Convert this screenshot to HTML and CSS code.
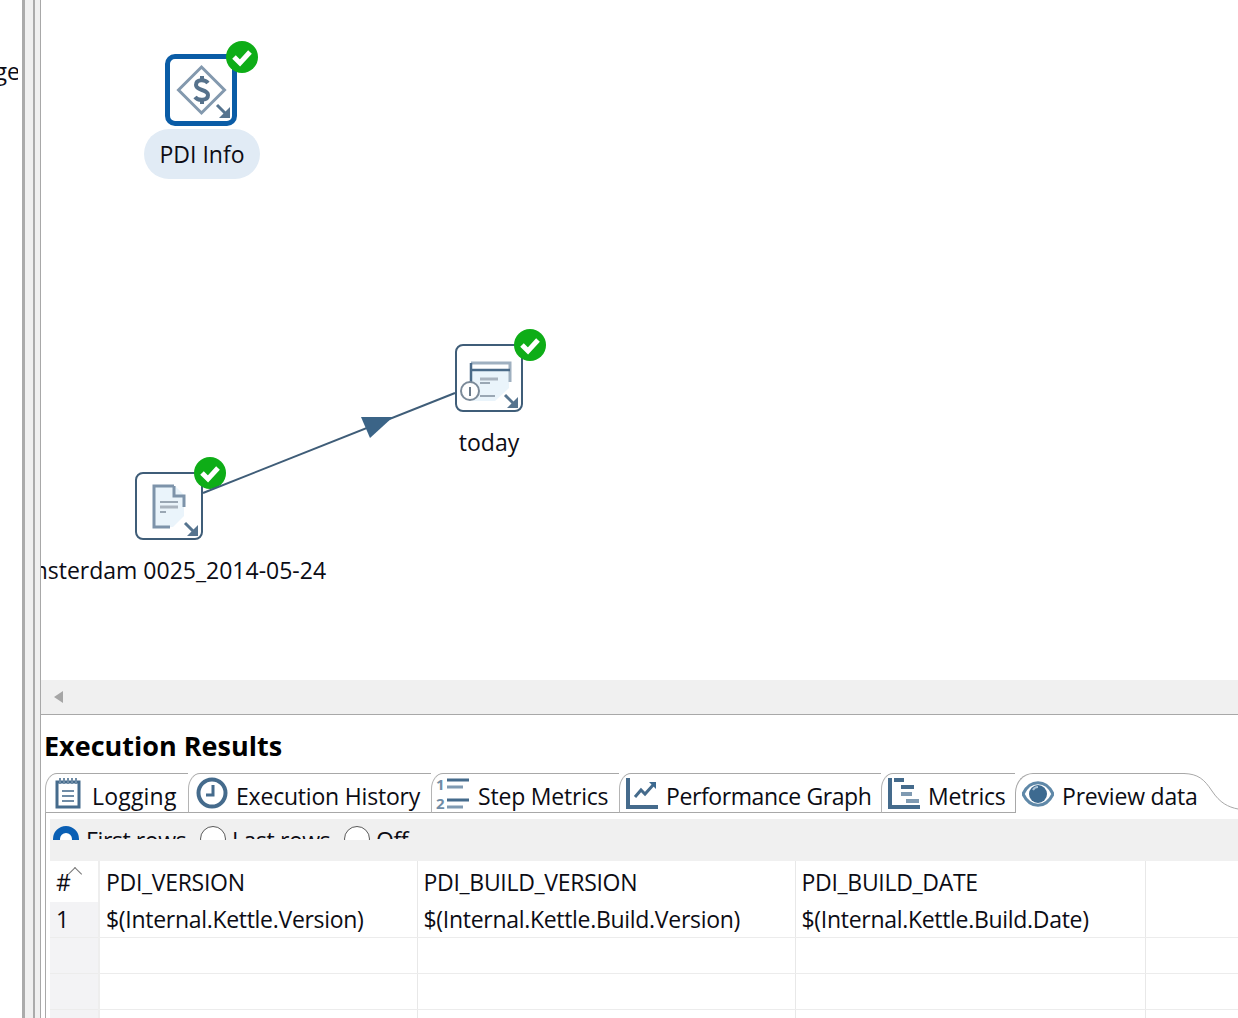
FILE: index.html
```html
<!DOCTYPE html>
<html>
    <head>
        <title>PDI Transformation</title>
        <link rel="stylesheet" href="styles.css">
    </head>
    <body>
        <div id="strip"><span class="stripText">Manage</span></div>
        <div id="splitter"><div class="sashA"></div><div class="sashB"></div></div>
        <main>
            <div id="canvas">
                <!-- PDI Info step -->
                <div class="step selected stepInfo">
                    <svg width="62" height="62" viewBox="0 0 62 62">
                        <path class="faint" d="M31.5 8 L54.5 31 L31.5 54 L8.5 31 Z"></path>
                        <path class="dollar" d="M38 24 C35 20 26 20 26 26 C26 32 38 30 38 36 C38 42 28 42 25 38 M32 17 V21 M32 41 V45"></path>
                        <path class="corner" d="M47 46 L58 57"></path>
                        <path class="cornerHead" d="M60 48 V59 H49 Z"></path>
                    </svg>
                </div>
                <div class="badge badgeInfo"><svg width="32" height="32" viewBox="0 0 32 32"><path d="M8 16 L14 22 L24 11"></path></svg></div>
                <div class="pill">PDI Info</div>

                <!-- today step -->
                <div class="step stepToday">
                    <svg width="64" height="64" viewBox="0 0 64 64">
                        <path class="fillPale" d="M15 24 H52 V42 L38 55 H15 Z"></path>
                        <path class="midLine" d="M14 17 H53 V36"></path>
                        <path class="darkLine" d="M14 17 V36 M14 24 H53"></path>
                        <path class="greyBar" d="M23 33 H41"></path>
                        <path class="greyThin" d="M23 37 H33 M23 50 H38"></path>
                        <circle class="infoDot" cx="13" cy="45" r="9"></circle>
                        <path class="infoMark" d="M13 41 V50"></path>
                        <path class="corner" d="M48 49 L59 60"></path>
                        <path class="cornerHead" d="M61 51 V62 H50 Z"></path>
                    </svg>
                </div>
                <div class="badge badgeToday"><svg width="32" height="32" viewBox="0 0 32 32"><path d="M8 16 L14 22 L24 11"></path></svg></div>
                <div class="stepLabel labelToday">today</div>

                <!-- text file input step -->
                <div class="step stepFile">
                    <svg width="64" height="64" viewBox="0 0 64 64">
                        <path class="fillPale" d="M17 12 H38 L47 21 V42 L36 53 H17 Z"></path>
                        <path class="docLine" d="M37 12 H17 V53 H33 M37 12 V22 H47 V33"></path>
                        <path class="greyThin" d="M23 28 H41 M23 38 H29"></path>
                        <path class="greyBar" d="M23 33 H41"></path>
                        <path class="corner" d="M48 49 L59 60"></path>
                        <path class="cornerHead" d="M61 51 V62 H50 Z"></path>
                    </svg>
                </div>
                <div class="badge badgeFile"><svg width="32" height="32" viewBox="0 0 32 32"><path d="M8 16 L14 22 L24 11"></path></svg></div>
                <div class="stepLabel labelFile">Amsterdam 0025_2014-05-24</div>

                <svg id="hop" width="1197" height="680" viewBox="0 0 1197 680">
                    <line x1="162" y1="493" x2="414" y2="393"></line>
                    <polygon points="320,417 352,417 329,438"></polygon>
                </svg>
            </div>

            <div id="hscroll"><span class="arrowLeft"></span></div>

            <section id="results">
                <h2>Execution Results</h2>
                <div id="tabs">
                    <div class="tab tabLogging">
                        <svg width="26" height="32" viewBox="0 0 26 32">
                            <path class="iconStroke" d="M2 5 H24 V30 H2 Z"></path>
                            <path class="iconThin" d="M7 14 H19 M7 19 H19 M7 24 H19"></path>
                            <path class="iconThin" d="M5 1 V7 M9 1 V7 M13 1 V7 M17 1 V7 M21 1 V7"></path>
                        </svg>
                        <span>Logging</span>
                    </div>
                    <div class="tab tabHistory">
                        <svg width="32" height="32" viewBox="0 0 32 32">
                            <circle class="iconStroke thick" cx="16" cy="16" r="13.5"></circle>
                            <path class="iconStroke" d="M17 8 V18 H10"></path>
                        </svg>
                        <span>Execution History</span>
                    </div>
                    <div class="tab tabSteps">
                        <svg width="34" height="34" viewBox="0 0 34 34">
                            <text class="iconNum" x="0" y="14">1</text>
                            <text class="iconNum" x="0" y="33">2</text>
                            <path class="iconStroke" d="M11 4 H33 M11 24 H33"></path>
                            <path class="iconPale" d="M11 11 H27 M11 31 H27"></path>
                        </svg>
                        <span>Step Metrics</span>
                    </div>
                    <div class="tab tabGraph">
                        <svg width="32" height="32" viewBox="0 0 32 32">
                            <path class="iconStroke thick" d="M2 1 V30 H32"></path>
                            <path class="iconStroke" d="M9 20 L15 13 L19 17 L28 7"></path>
                            <path class="iconFill" d="M23 5 H30 V12 Z"></path>
                        </svg>
                        <span>Performance Graph</span>
                    </div>
                    <div class="tab tabMetrics">
                        <svg width="32" height="32" viewBox="0 0 32 32">
                            <path class="iconStroke thick" d="M2 1 V30 H32"></path>
                            <path class="iconStroke thick" d="M6 3 H16 M13 10 H26"></path>
                            <path class="iconPale thick" d="M13 17 H24 M18 24 H31"></path>
                        </svg>
                        <span>Metrics</span>
                    </div>
                    <div class="tab tabPreview">
                        <svg width="32" height="26" viewBox="0 0 32 26">
                            <path class="iconEye" d="M1 13 C8 -2 24 -2 31 13 C24 28 8 28 1 13 Z"></path>
                            <circle class="iconFill" cx="16" cy="13" r="9"></circle>
                            <path class="iconShine" d="M11 9 C12 7 14 6 16 6"></path>
                        </svg>
                        <span>Preview data</span>
                    </div>
                    <svg id="tabCurve" width="54" height="37" viewBox="0 0 54 37">
                        <path d="M0 0.5 C14 1 20 6 28 18 C36 30 44 34 54 36"></path>
                    </svg>
                </div>

                <div id="folderBody">
                    <div id="toolbar">
                        <div class="radios">
                            <span class="radio on"></span><span class="radioText radioFirst">First rows</span>
                            <span class="radio"></span><span class="radioText">Last rows</span>
                            <span class="radio"></span><span class="radioText">Off</span>
                        </div>
                    </div>

                    <table id="grid">
                        <colgroup>
                            <col class="colNum"><col class="colA"><col class="colB"><col class="colC"><col>
                        </colgroup>
                        <tr class="headRow">
                            <th class="numHead">#<span class="sortMark"></span></th>
                            <th>PDI_VERSION</th>
                            <th>PDI_BUILD_VERSION</th>
                            <th>PDI_BUILD_DATE</th>
                            <th></th>
                        </tr>
                        <tr class="firstRow">
                            <td class="num">1</td>
                            <td>$(Internal.Kettle.Version)</td>
                            <td>$(Internal.Kettle.Build.Version)</td>
                            <td>$(Internal.Kettle.Build.Date)</td>
                            <td></td>
                        </tr>
                        <tr><td class="num"></td><td></td><td></td><td></td><td></td></tr>
                        <tr><td class="num"></td><td></td><td></td><td></td><td></td></tr>
                        <tr><td class="num"></td><td></td><td></td><td></td><td></td></tr>
                    </table>
                </div>
            </section>
        </main>
    </body>
</html>
```

FILE: styles.css
```css
html, body{
    margin:0;
    padding:0;
    height:1018px;
    overflow:hidden;
}
body{
    display:flex;
    width:1238px;
    font-family:"Open Sans", sans-serif;
    font-size:23px;
    color:#0c0c14;
    background-color:#fff;
}
#strip{
    width:22px;
    overflow:hidden;
    position:relative;
    flex:none;
    clip-path:inset(0 4px 0 0);
}
.stripText{
    position:absolute;
    right:2px;
    top:55px;
    white-space:nowrap;
}
#splitter{
    width:19px;
    flex:none;
    display:flex;
    box-sizing:border-box;
    background-color:#f0f0f0;
    border-right:1px solid #a8a8a8;
}
.sashA{
    width:13px;
    box-sizing:border-box;
    border-left:3px solid #ababab;
    border-right:2px solid #ababab;
}
.sashB{
    width:5px;
    background-color:#f0f0f0;
}
main{
    flex:1;
    min-width:0;
    display:flex;
    flex-direction:column;
}

/* canvas */
#canvas{
    height:680px;
    position:relative;
    overflow:hidden;
    flex:none;
}
#hop{
    position:absolute;
    left:0;
    top:0;
}
#hop line{
    stroke:#3f5d78;
    stroke-width:2;
}
#hop polygon{
    fill:#3b6487;
}
.step{
    position:absolute;
    box-sizing:border-box;
    width:68px;
    height:68px;
    border:2px solid #3f5d78;
    border-radius:8px;
    background-color:#fff;
}
.step svg{
    display:block;
}
.step.selected{
    width:72px;
    height:72px;
    border:5px solid #0a5ca6;
    border-radius:10px;
}
.stepInfo{ left:124px; top:54px; }
.stepToday{ left:414px; top:344px; }
.stepFile{ left:94px; top:472px; }
.badge{
    position:absolute;
    width:32px;
    height:32px;
    border-radius:50%;
    background-color:#0ead17;
}
.badge svg{
    display:block;
}
.badge path{
    fill:none;
    stroke:#fff;
    stroke-width:5;
}
.badgeInfo{ left:185px; top:41px; }
.badgeToday{ left:473px; top:329px; }
.badgeFile{ left:153px; top:457px; }
.pill{
    position:absolute;
    left:103px;
    top:129px;
    width:116px;
    height:50px;
    line-height:51px;
    border-radius:25px;
    text-align:center;
    background-color:#e1ebf5;
}
.stepLabel{
    position:absolute;
    white-space:nowrap;
    transform:translateX(-50%);
}
.labelToday{ left:448px; top:426px; }
.labelFile{ left:128px; top:554px; }
.faint{
    fill:none;
    stroke:#8399ae;
    stroke-width:3;
}
.dollar{
    fill:none;
    stroke:#56728c;
    stroke-width:4;
}
.corner{
    fill:none;
    stroke:#56748f;
    stroke-width:3;
}
.cornerHead{
    fill:#56748f;
}
.fillPale{
    fill:#eaf4fb;
    stroke:none;
}
.darkLine{
    fill:none;
    stroke:#4a6a88;
    stroke-width:2.5;
}
.midLine{
    fill:none;
    stroke:#9fb0c0;
    stroke-width:3;
}
.greyBar{
    fill:none;
    stroke:#aab4bf;
    stroke-width:3;
}
.greyThin{
    fill:none;
    stroke:#9aa7b4;
    stroke-width:2;
}
.docLine{
    fill:none;
    stroke:#7d93aa;
    stroke-width:3;
}
.infoDot{
    fill:#fff;
    stroke:#7b8a99;
    stroke-width:2;
}
.infoMark{
    fill:none;
    stroke:#6b7b8b;
    stroke-width:2;
}

/* scrollbar */
#hscroll{
    height:34px;
    flex:none;
    box-sizing:border-box;
    display:flex;
    align-items:center;
    padding-left:13px;
    background-color:#f0f0f0;
}
.arrowLeft{
    width:0;
    height:0;
    border-top:6px solid transparent;
    border-bottom:6px solid transparent;
    border-right:9px solid #a6a6a6;
}

/* results */
#results{
    flex:1;
    border-top:1px solid #a8a8a8;
    padding-left:4px;
    min-height:0;
}
h2{
    margin:0 0 0 -1px;
    height:58px;
    line-height:62px;
    font-size:27px;
    font-weight:700;
    color:#000;
}
#tabs{
    height:40px;
    display:flex;
    position:relative;
    letter-spacing:-0.2px;
}
.tab{
    display:flex;
    align-items:center;
    box-sizing:border-box;
    height:40px;
    flex:none;
    white-space:nowrap;
    border-top:1px solid #a8a8a8;
    border-left:1px solid #b4b4b4;
    border-bottom:1px solid #a8a8a8;
    border-top-left-radius:12px 16px;
}
.tab svg{
    flex:none;
}
.tab span{
    margin-top:5px;
}
.tabLogging{ width:143px; padding-left:9px; gap:11px; letter-spacing:0.2px; }
.tabHistory{ width:243px; padding-left:7px; gap:8px; }
.tabSteps{ width:188px; padding-left:4px; gap:8px; }
.tabGraph{ width:262px; padding-left:6px; gap:8px; letter-spacing:-0.4px; }
.tabMetrics{ width:134px; padding-left:6px; gap:8px; }
.tabPreview{
    width:170px;
    padding-left:6px;
    gap:8px;
    border-bottom:0;
    border-top-left-radius:18px 20px;
    border-left-color:#a8a8a8;
}
.tabPreview span{
    margin-top:4px;
}
#tabCurve{
    position:absolute;
    left:1139px;
    top:0;
}
#tabCurve path{
    fill:none;
    stroke:#a8a8a8;
}
.iconStroke{
    fill:none;
    stroke:#456b8c;
    stroke-width:3;
}
.iconThin{
    fill:none;
    stroke:#6f8ca6;
    stroke-width:2;
}
.iconPale{
    fill:none;
    stroke:#7f9ab2;
    stroke-width:3;
}
.thick{
    stroke-width:4;
}
.iconFill{
    fill:#3d6a90;
}
.iconEye{
    fill:#fff;
    stroke:#5f88a8;
    stroke-width:3;
}
.iconShine{
    fill:none;
    stroke:#a9c2d6;
    stroke-width:2;
}
.iconNum{
    font-size:15px;
    font-weight:700;
    fill:#6f8ca6;
}

#folderBody{
    border-left:1px solid #a8a8a8;
}

/* radios, cut off at the bottom of the bar */
#toolbar{
    padding-top:6px;
    margin-left:4px;
    background-color:#fff;
}
.radios{
    height:19px;
    padding-top:6px;
    padding-bottom:17px;
    background-color:#f0f0f0;
    display:flex;
    align-items:flex-start;
}
.radios > span{
    clip-path:inset(-2px -2px calc(100% - 14px) -2px);
}
.radio{
    flex:none;
    box-sizing:border-box;
    width:26px;
    height:26px;
    margin-top:1px;
    border:1px solid #5a5a5a;
    border-radius:50%;
    background-color:#fff;
    margin-left:3px;
}
.radio.on{
    border:7px solid #0a5fb4;
    margin-right:1px;
}
.radioText{
    margin-left:6px;
    width:109px;
    line-height:30px;
    letter-spacing:-0.4px;
    white-space:nowrap;
    flex:none;
}
.radioFirst{
    width:111px;
}

/* preview grid */
#grid{
    margin-left:4px;
    width:1192px;
    table-layout:fixed;
    border-collapse:collapse;
}
.colNum{ width:49px; }
.colA{ width:318px; }
.colB{ width:378px; }
.colC{ width:350px; }
#grid th, #grid td{
    padding:0 0 0 6px;
    text-align:left;
    font-weight:400;
    letter-spacing:-0.3px;
    white-space:nowrap;
    overflow:hidden;
    border-right:1px solid #e8e8e8;
    border-bottom:1px solid #ececec;
}
#grid th{
    height:41px;
    box-sizing:border-box;
    border-bottom:0;
}
#grid td{
    height:36px;
    box-sizing:border-box;
}
#grid .firstRow td{
    height:35px;
    line-height:30px;
    padding-top:2px;
    padding-bottom:2px;
}
#grid .num{
    background-color:#f3f3f5;
    border-right:2px solid #eeeeee;
}
#grid .numHead{
    position:relative;
    border-right:2px solid #eeeeee;
}
.sortMark{
    position:absolute;
    left:20px;
    top:8px;
    width:9px;
    height:9px;
    border-top:1px solid #777;
    border-left:1px solid #777;
    transform:rotate(45deg);
}
```
